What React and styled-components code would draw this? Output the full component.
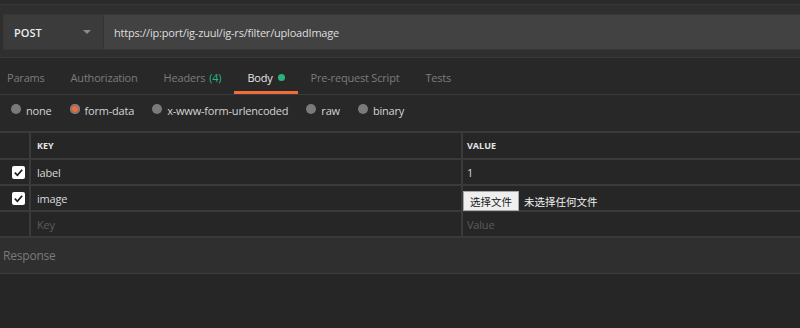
import React from "react";
import styled, { createGlobalStyle } from "styled-components";

const GlobalStyle = createGlobalStyle`
  html, body {
    margin: 0;
    padding: 0;
    background: #262626;
  }
  body {
    font-family: "Open Sans", "Noto Sans CJK SC", sans-serif;
    font-size: 11px;
    letter-spacing: -0.2px;
    color: #d6d6d6;
  }
`;

const tabs = [
  { name: "Params" },
  { name: "Authorization" },
  { name: "Headers", count: "(4)" },
  { name: "Body", active: true, dot: true },
  { name: "Pre-request Script" },
  { name: "Tests" },
];

const modes = [
  { name: "none" },
  { name: "form-data", checked: true },
  { name: "x-www-form-urlencoded" },
  { name: "raw" },
  { name: "binary" },
];

const App = () => {
  return (
    <Wrapper>
      <GlobalStyle />
      <TopArea>
        <UrlBar>
          <Method>
            <span>POST</span>
            <Caret />
          </Method>
          <UrlInput>https://ip:port/ig-zuul/ig-rs/filter/uploadImage</UrlInput>
        </UrlBar>
      </TopArea>

      <Tabs>
        {tabs.map((tab) => (
          <Tab key={tab.name} active={tab.active}>
            {tab.name}
            {tab.count && <Count>{tab.count}</Count>}
            {tab.dot && <Dot />}
          </Tab>
        ))}
      </Tabs>

      <Modes>
        {modes.map((m) => (
          <Mode key={m.name}>
            <Radio checked={m.checked} />
            {m.name}
          </Mode>
        ))}
      </Modes>

      <Table>
        <Row head>
          <Cell />
          <HeadCell>KEY</HeadCell>
          <HeadCell value>VALUE</HeadCell>
        </Row>
        <Row>
          <CheckCell>
            <Check />
          </CheckCell>
          <Cell>label</Cell>
          <Cell value>1</Cell>
        </Row>
        <Row>
          <CheckCell>
            <Check />
          </CheckCell>
          <Cell>image</Cell>
          <Cell value>
            <FileButton>选择文件</FileButton>
            <FileText>未选择任何文件</FileText>
          </Cell>
        </Row>
        <Row>
          <Cell />
          <Cell placeholder>Key</Cell>
          <Cell value placeholder>Value</Cell>
        </Row>
      </Table>

      <ResponseBar>Response</ResponseBar>
    </Wrapper>
  );
};

const Check = () => (
  <CheckBox>
    <svg width="11" height="11" viewBox="0 0 12 12">
      <path
        d="M2 6.2 L4.8 9 L10 3"
        fill="none"
        stroke="#1a1a1a"
        strokeWidth="1.9"
      />
    </svg>
  </CheckBox>
);

const Wrapper = styled.div`
  width: 800px;
  height: 328px;
  overflow: hidden;
  background: #262626;
`;

const TopArea = styled.div`
  background: #2f2f2f;
  border-top: 4px solid #2b2b2b;
  box-shadow: inset 0 1px 0 #383838;
  padding: 10px 0 7px 3px;
  border-bottom: 1px solid #3a3a3a;
`;

const UrlBar = styled.div`
  display: flex;
  height: 34px;
  border: 1px solid #363636;
  border-right: none;
  background: #424242;
`;

const Method = styled.div`
  width: 100px;
  display: flex;
  align-items: center;
  justify-content: space-between;
  padding: 0 10px 0 10px;
  box-sizing: border-box;
  background: #3b3b3b;
  border-right: 1px solid #353535;
  color: #ececec;
  font-weight: 600;
  font-size: 11px;
  letter-spacing: 0;
`;

const Caret = styled.span`
  width: 0;
  height: 0;
  border-left: 4px solid transparent;
  border-right: 4px solid transparent;
  border-top: 4px solid #8a8a8a;
  margin-right: 2px;
`;

const UrlInput = styled.div`
  display: flex;
  align-items: center;
  padding-left: 10px;
  color: #dedede;
`;

const Tabs = styled.div`
  display: flex;
  height: 36px;
  margin-left: -6px;
  border-bottom: 1px solid #3a3a3a;
  background: #282828;
`;

const Tab = styled.div`
  display: flex;
  align-items: center;
  padding: 5px 13px 0;
  color: ${(p) => (p.active ? "#e6e6e6" : "#7c7c7c")};
  border-bottom: 3px solid ${(p) => (p.active ? "#f26b3a" : "transparent")};
  box-sizing: border-box;
`;

const Count = styled.span`
  color: #26b47f;
  margin-left: 4px;
`;

const Dot = styled.span`
  width: 7px;
  height: 7px;
  border-radius: 50%;
  background: #26b47f;
  margin-left: 5px;
`;

const Modes = styled.div`
  display: flex;
  align-items: center;
  height: 36px;
  box-sizing: border-box;
  padding: 0 0 6px 11px;
  gap: 18px;
  background: #282828;
`;

const Mode = styled.div`
  display: flex;
  align-items: center;
  gap: 5px;
  color: #d4d4d4;
`;

const Radio = styled.span`
  width: 10px;
  height: 10px;
  border-radius: 50%;
  background: ${(p) => (p.checked ? "#f26b3a" : "#7a7a7a")};
  box-shadow: ${(p) => (p.checked ? "inset 0 0 0 2px #7a7a7a" : "none")};
  margin-top: -3px;
`;

const Table = styled.div`
  border-top: 2px solid #3a3a3a;
  background: #262626;
`;

const Row = styled.div`
  display: grid;
  grid-template-columns: 29px 432px 1fr;
  height: ${(p) => (p.head ? "25px" : "24px")};
  border-bottom: 2px solid #3a3a3a;
`;

const Cell = styled.div`
  display: flex;
  align-items: center;
  padding-left: ${(p) => (p.value ? "4px" : "6px")};
  border-left: 2px solid #3a3a3a;
  color: ${(p) => (p.placeholder ? "#5c5c5c" : "#d8d8d8")};
  &:first-child {
    border-left: none;
  }
`;

const HeadCell = styled(Cell)`
  font-size: 9px;
  font-weight: 700;
  letter-spacing: 0;
  color: #e4e4e4;
`;

const CheckCell = styled(Cell)`
  justify-content: flex-end;
  padding: 0 4px 0 0;
`;

const CheckBox = styled.span`
  width: 13px;
  height: 13px;
  border-radius: 2px;
  background: #ffffff;
  display: flex;
  align-items: center;
  justify-content: center;
`;

const FileButton = styled.span`
  display: inline-flex;
  align-items: center;
  height: 20px;
  margin-top: 5px;
  margin-left: -4px;
  padding: 0 6px;
  background: #efefef;
  border: 1px solid #a8a8a8;
  box-sizing: border-box;
  color: #1a1a1a;
  font-family: "Noto Sans CJK SC", sans-serif;
  font-size: 10.5px;
  letter-spacing: 0;
`;

const FileText = styled.span`
  margin-left: 5px;
  margin-top: 5px;
  color: #f0f0f0;
  font-family: "Noto Sans CJK SC", sans-serif;
  font-size: 10.5px;
  letter-spacing: 0;
`;

const ResponseBar = styled.div`
  height: 35px;
  display: flex;
  align-items: center;
  padding-left: 3px;
  background: #2f2f2f;
  border-bottom: 1px solid #3e3e3e;
  color: #7a7a7a;
  font-size: 12px;
`;

export default App;
